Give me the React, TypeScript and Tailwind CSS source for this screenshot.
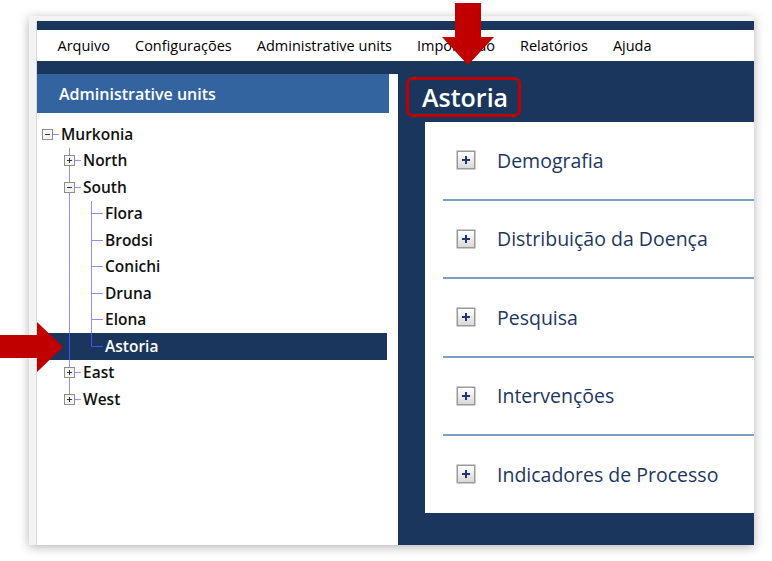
import React from 'react';

const LINE = '#8f8fff';

type CellKind = 'blank' | 'pipe' | 'tee' | 'elbow' | 'box';

interface TreeRow {
  label: string;
  cells: CellKind[];
  box?: 'plus' | 'minus';
  up?: boolean;
  down?: boolean;
  selected?: boolean;
}

const ROWS: TreeRow[] = [
  { label: 'Murkonia', cells: ['box'], box: 'minus' },
  { label: 'North', cells: ['blank', 'box'], box: 'plus', up: true, down: true },
  { label: 'South', cells: ['blank', 'box'], box: 'minus', up: true, down: true },
  { label: 'Flora', cells: ['blank', 'pipe', 'tee'] },
  { label: 'Brodsi', cells: ['blank', 'pipe', 'tee'] },
  { label: 'Conichi', cells: ['blank', 'pipe', 'tee'] },
  { label: 'Druna', cells: ['blank', 'pipe', 'tee'] },
  { label: 'Elona', cells: ['blank', 'pipe', 'tee'] },
  { label: 'Astoria', cells: ['blank', 'pipe', 'elbow'], selected: true },
  { label: 'East', cells: ['blank', 'box'], box: 'plus', up: true, down: true },
  { label: 'West', cells: ['blank', 'box'], box: 'plus', up: true },
];

function TreeBox({ kind }: { kind: 'plus' | 'minus' }) {
  return (
    <g>
      <rect x="5.5" y="8.5" width="10" height="10" fill="#f4f4f4" stroke="#8e8e8e" />
      <line x1="8" y1="13.5" x2="13" y2="13.5" stroke="#333" />
      {kind === 'plus' && <line x1="10.5" y1="11" x2="10.5" y2="16" stroke="#333" />}
    </g>
  );
}

function Cell({ kind, row }: { kind: CellKind; row: TreeRow }) {
  const c = row.selected ? '#4d4dff' : LINE;
  return (
    <svg width="22" height="27" viewBox="0 0 22 27" className="shrink-0">
      {kind === 'pipe' && <line x1="10.5" y1="0" x2="10.5" y2="27" stroke={c} />}
      {kind === 'tee' && (
        <>
          <line x1="10.5" y1="0" x2="10.5" y2="27" stroke={c} />
          <line x1="10.5" y1="13.5" x2="22" y2="13.5" stroke={c} />
        </>
      )}
      {kind === 'elbow' && (
        <>
          <line x1="10.5" y1="0" x2="10.5" y2="13.5" stroke={c} />
          <line x1="10.5" y1="13.5" x2="22" y2="13.5" stroke={c} />
        </>
      )}
      {kind === 'box' && (
        <>
          {row.up && <line x1="10.5" y1="0" x2="10.5" y2="8.5" stroke={c} />}
          {row.down && <line x1="10.5" y1="18.5" x2="10.5" y2="27" stroke={c} />}
          <line x1="15.5" y1="13.5" x2="22" y2="13.5" stroke={c} />
          <TreeBox kind={row.box ?? 'plus'} />
        </>
      )}
    </svg>
  );
}

function PlusIcon() {
  return (
    <svg width="20" height="20" viewBox="0 0 20 20" className="shrink-0">
      <defs>
        <linearGradient id="pg" x1="0" y1="0" x2="0" y2="1">
          <stop offset="0" stopColor="#ffffff" />
          <stop offset="1" stopColor="#d9d9d9" />
        </linearGradient>
      </defs>
      <rect x="0.5" y="0.5" width="19" height="19" fill="#9a9a9a" />
      <rect x="2" y="2" width="16" height="16" fill="url(#pg)" />
      <rect x="6" y="9" width="8" height="2" fill="#22337a" />
      <rect x="9" y="6" width="2" height="8" fill="#22337a" />
    </svg>
  );
}

const SECTIONS = ['Demografia', 'Distribuição da Doença', 'Pesquisa', 'Intervenções', 'Indicadores de Processo'];
const MENU = ['Arquivo', 'Configurações', 'Administrative units', 'Importação', 'Relatórios', 'Ajuda'];

export default function App() {
  return (
    <div
      className="relative w-[772px] h-[561px] bg-white overflow-hidden pt-[16px] pl-[29px]"
      style={{ fontFamily: '"Open Sans", "Noto Sans", sans-serif' }}
    >
      <div className="w-[725px] h-[529px] bg-[#f3f3f3] pt-[5px] pl-[7px] shadow-[0_2px_10px_rgba(0,0,0,0.3)] flex">
        <div className="flex-1 flex flex-col border-l border-[#d8d8d8]">
          <div className="h-[9px] bg-[#1b365d]" />
          <div className="h-[31px] bg-white flex items-center pl-[8px] text-[14.5px] text-black">
            {MENU.map((m) => (
              <span key={m} className="px-[12.5px]">{m}</span>
            ))}
          </div>
          <div className="flex-1 flex bg-[#1b365d]">
            <div className="w-[361px] flex flex-col">
              <div className="h-[13px]" />
              <div className="flex-1 bg-white flex flex-col">
                <div className="h-[39px] w-[352px] bg-[#3464a0] flex items-center pl-[22px] text-white text-[16px] font-semibold">
                  Administrative units
                </div>
                <div className="pt-[8px]">
                  {ROWS.map((r) => (
                    <div
                      key={r.label}
                      className={`h-[26.5px] w-[350px] flex items-center overflow-hidden ${r.selected ? 'bg-[#1b365d] text-white' : 'text-[#111]'}`}
                    >
                      {r.cells.map((k, i) => (
                        <Cell key={i} kind={k} row={r} />
                      ))}
                      <span className="ml-[2px] text-[15.5px] font-semibold leading-none">{r.label}</span>
                    </div>
                  ))}
                </div>
              </div>
            </div>
            <div className="flex-1 flex flex-col pb-[32px]">
              <div className="pt-[16px] pl-[8px]">
                <div className="h-[40px] w-[115px] border-[3px] border-[#c00000] rounded-[7px] flex items-center pl-[13px] text-white text-[25px] font-semibold leading-none">
                  Astoria
                </div>
              </div>
              <div className="mt-[5px] ml-[27px] flex-1 bg-white flex flex-col">
                {SECTIONS.map((s, i) => (
                  <React.Fragment key={s}>
                    {i > 0 && <div className="h-[2px] ml-[18px] bg-[#7e9cc6]" />}
                    <div className="h-[76.5px] flex items-center pl-[31px] gap-[21px] text-[19.5px] font-medium text-[#1d3761]">
                      <PlusIcon />
                      <span>{s}</span>
                    </div>
                  </React.Fragment>
                ))}
              </div>
            </div>
          </div>
        </div>
      </div>

      {/* callout arrows */}
      <svg className="absolute left-[440px] top-0" width="56" height="68" viewBox="0 0 56 68">
        <polygon points="15,3 41,3 41,37 54,37 28,65 2,37 15,37" fill="#c00000" />
      </svg>
      <svg className="absolute left-0 top-[320px]" width="66" height="54" viewBox="0 0 66 54">
        <polygon points="0,15 37,15 37,2 63,27 37,52 37,38 0,38" fill="#c00000" />
      </svg>
    </div>
  );
}
